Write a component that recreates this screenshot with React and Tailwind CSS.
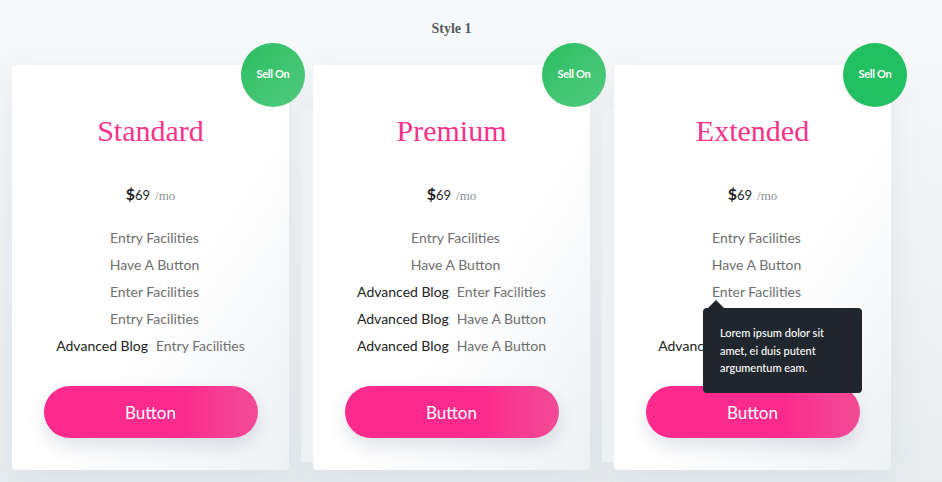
const plans = [
  {
    name: "Standard",
    badge: "bg-gradient-to-br from-[#27bd5f] to-[#52cc80]",
    rows: [
      { text: "Entry Facilities" },
      { text: "Have A Button" },
      { text: "Enter Facilities" },
      { text: "Entry Facilities" },
      { label: "Advanced Blog", text: "Entry Facilities" },
    ],
  },
  {
    name: "Premium",
    badge: "bg-gradient-to-br from-[#27bd5f] to-[#52cc80]",
    backdrop: true,
    rows: [
      { text: "Entry Facilities" },
      { text: "Have A Button" },
      { label: "Advanced Blog", text: "Enter Facilities" },
      { label: "Advanced Blog", text: "Have A Button" },
      { label: "Advanced Blog", text: "Have A Button" },
    ],
  },
  {
    name: "Extended",
    badge: "bg-[#23c062]",
    backdrop: true,
    tooltipRow: 2,
    rows: [
      { text: "Entry Facilities" },
      { text: "Have A Button" },
      { text: "Enter Facilities" },
      { text: "Entry Facilities" },
      { label: "Advanced Blog", text: "Entry Facilities" },
    ],
  },
];

function Tooltip() {
  return (
    <div className="absolute left-[-9px] top-[30px] z-20 w-[159px] h-[85px] rounded bg-[#1f262e] pl-[17px] pr-3 pt-[16px] text-left">
      <div className="absolute left-[5px] top-[-8px] w-0 h-0 border-x-[8px] border-x-transparent border-b-[8px] border-b-[#1f262e]" />
      <p className="font-['Lato',sans-serif] text-[11px] leading-[17.5px] font-medium text-white">
        Lorem ipsum dolor sit amet, ei duis putent argumentum eam.
      </p>
    </div>
  );
}

function PlanCard({ plan }) {
  return (
    <div
      className={`relative w-[277.5px] h-[405px] rounded-[4px] bg-gradient-to-br from-white from-55% to-[#eef1f4] flex flex-col items-center pt-[48px] pb-[32px] ${
        plan.backdrop
          ? "shadow-[-37px_17px_0_-25px_#eef1f4,0_12px_40px_rgba(30,50,80,0.07)]"
          : "shadow-[0_12px_40px_rgba(30,50,80,0.07)]"
      }`}
    >
      <div className={`absolute -top-[22px] -right-[16px] w-16 h-16 rounded-full ${plan.badge} flex items-center justify-center pb-[2px]`}>
        <span className="font-['Lato',sans-serif] font-bold text-[11px] tracking-[-0.3px] text-white">Sell On</span>
      </div>

      <h2 className="font-['Liberation_Serif',serif] text-[30px] leading-[36px] text-[#f7338a]">{plan.name}</h2>

      <div className="mt-[33px] h-5 flex items-baseline gap-[5px]">
        <span className="font-['Lato',sans-serif] text-[#1e2329]">
          <span className="font-bold text-[16px]">$</span>
          <span className="text-[13px]">69</span>
        </span>
        <span className="font-['Liberation_Serif',serif] text-[13px] text-[#8a8f96]">/mo</span>
      </div>

      <ul className="mt-[22px] flex flex-col items-center font-['Lato',sans-serif] text-[14px] leading-[27px] text-[#6f6f6f]">
        {plan.rows.map((r, i) => (
          <li key={i} className={`flex gap-2 ${r.label ? "" : "pl-2"}`}>
            {r.label && <span className="text-[#222]">{r.label}</span>}
            <span className="relative">
              {r.text}
              {plan.tooltipRow === i && <Tooltip />}
            </span>
          </li>
        ))}
      </ul>

      <button className="mt-auto w-[214px] h-[52px] rounded-full bg-gradient-to-r from-[#fb2a8c] from-65% to-[#f24b96] shadow-[0_8px_18px_rgba(60,80,110,0.16)] font-['Lato',sans-serif] text-[17px] leading-[54px] text-white">
        Button
      </button>
    </div>
  );
}

export default function App() {
  return (
    <div className="w-[942px] h-[482px] overflow-hidden bg-gradient-to-b from-[#f8f9fa] to-[#e9edf0]">
      <div className="w-[891px] pl-3 pt-[19px]">
        <h1 className="text-center font-['Liberation_Serif',serif] font-bold text-[14px] leading-5 text-[#555a60]">Style 1</h1>
        <div className="mt-[26px] flex gap-6">
          {plans.map((p) => (
            <PlanCard key={p.name} plan={p} />
          ))}
        </div>
      </div>
    </div>
  );
}
